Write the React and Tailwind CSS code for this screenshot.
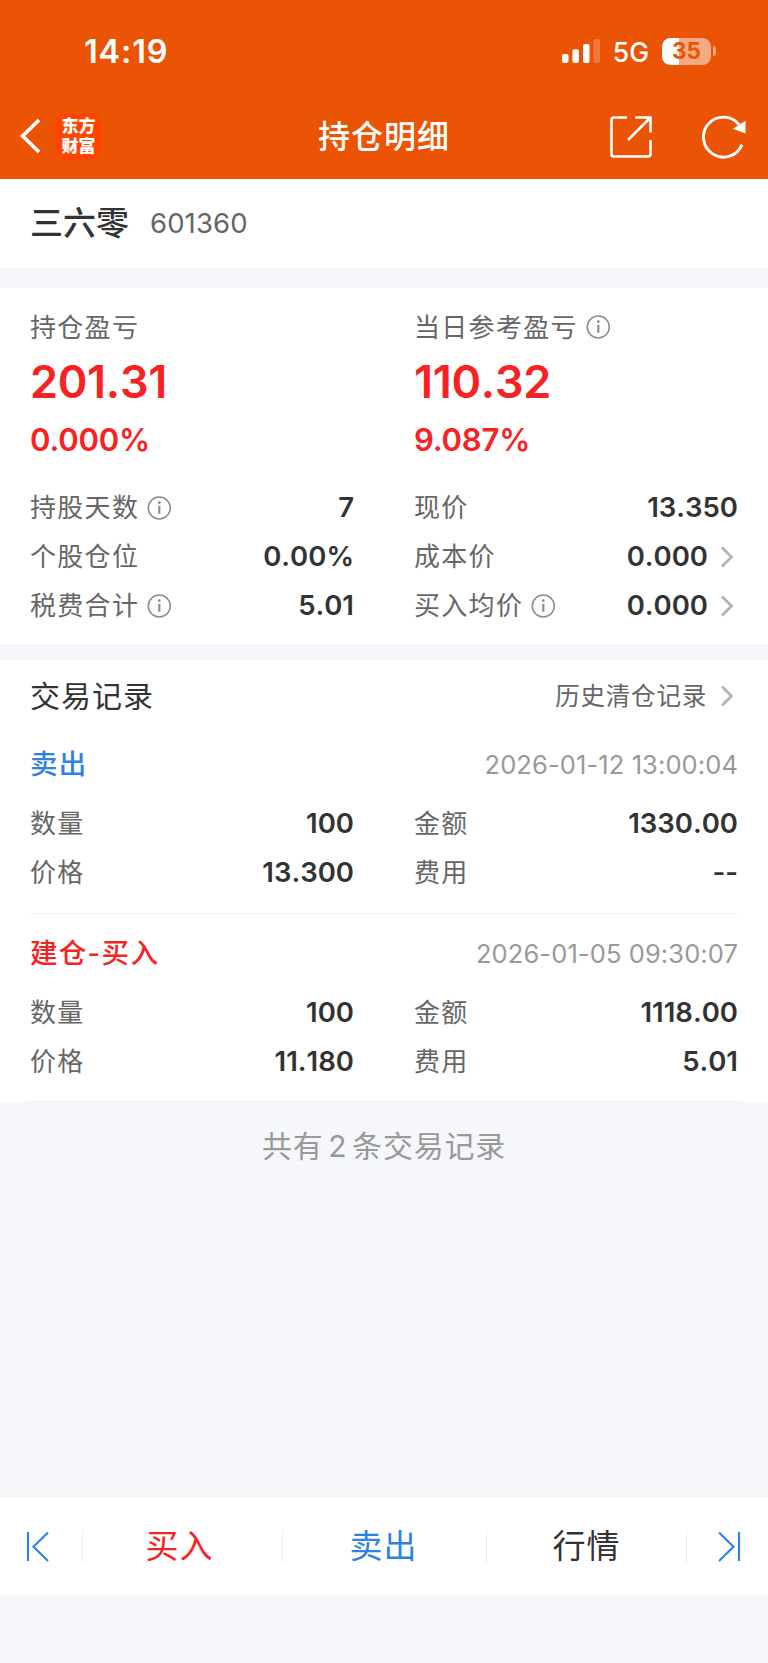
import clsx from "clsx";

const summary = [
  [
    { label: "持股天数", value: "7", info: true },
    { label: "现价", value: "13.350" },
  ],
  [
    { label: "个股仓位", value: "0.00%" },
    { label: "成本价", value: "0.000", link: true },
  ],
  [
    { label: "税费合计", value: "5.01", info: true },
    { label: "买入均价", value: "0.000", info: true, link: true },
  ],
];

const trades = [
  {
    type: "卖出",
    color: "text-[#2f80e7]",
    time: "2026-01-12 13:00:04",
    rows: [
      [{ label: "数量", value: "100" }, { label: "金额", value: "1330.00" }],
      [{ label: "价格", value: "13.300" }, { label: "费用", value: "--" }],
    ],
  },
  {
    type: "建仓-买入",
    color: "text-[#f82222]",
    time: "2026-01-05 09:30:07",
    rows: [
      [{ label: "数量", value: "100" }, { label: "金额", value: "1118.00" }],
      [{ label: "价格", value: "11.180" }, { label: "费用", value: "5.01" }],
    ],
  },
];

function InfoIcon() {
  return (
    <svg width="24" height="24" viewBox="0 0 24 24" fill="none" className="ml-2 text-[#8c8c8c]">
      <circle cx="12.3" cy="12" r="11" stroke="currentColor" strokeWidth="1.6" />
      <path d="M12.3 9.8v8" stroke="currentColor" strokeWidth="2.2" />
      <circle cx="12.3" cy="6.7" r="1.4" fill="currentColor" />
    </svg>
  );
}

function ChevronIcon() {
  return (
    <svg width="14" height="22" viewBox="0 0 14 22" fill="none" className="ml-3 mr-1">
      <path d="M2 1.5L11.5 11L2 20.5" stroke="#b3b3b3" strokeWidth="2.7" />
    </svg>
  );
}

function Field({ label, value, info, link }) {
  return (
    <div className="flex flex-1 items-center justify-between">
      <div className="flex items-center">
        <span className="text-[26px] tracking-[1.3px] text-[#666]">{label}</span>
        {info && <InfoIcon />}
      </div>
      <div className="flex items-center">
        <span className="text-[27.5px] font-semibold text-[#333] [font-kerning:none]">{value}</span>
        {link && <ChevronIcon />}
      </div>
    </div>
  );
}

function FieldRows({ rows }) {
  return rows.map((row, i) => (
    <div key={i} className="flex h-[49px] gap-[60px]">
      {row.map((field) => (
        <Field key={field.label} {...field} />
      ))}
    </div>
  ));
}

function Profit({ label, amount, percent, info }) {
  return (
    <div className="flex-1">
      <div className="flex h-[38px] items-center">
        <span className="text-[26px] tracking-[1.3px] text-[#666]">{label}</span>
        {info && <InfoIcon />}
      </div>
      <div className="mt-2 h-14 text-[45px] leading-14 font-semibold tracking-[-0.3px] text-[#f82222] [font-kerning:none]">{amount}</div>
      <div className="mt-2.5 h-10 text-[31px] leading-10 font-semibold tracking-[-0.2px] text-[#f82222]">{percent}</div>
    </div>
  );
}

function StatusBar() {
  return (
    <div className="flex h-[102px] items-center justify-between pr-[52px] pl-[84px] text-white">
      <span className="pt-0.5 text-[32.5px] font-semibold tracking-[0.8px]">14:19</span>
      <div className="flex items-center">
        <svg width="39" height="25" viewBox="0 0 39 25" fill="currentColor">
          <rect x="0" y="15" width="6.5" height="9" rx="2" />
          <rect x="10.4" y="10.3" width="6.5" height="13.7" rx="2" />
          <rect x="21" y="5" width="6.5" height="19" rx="2" />
          <rect x="31.5" y="0" width="6.5" height="24" rx="2" opacity="0.22" />
        </svg>
        <span className="ml-3 pt-[3px] text-[26.5px] font-medium">5G</span>
        <div className="ml-[13px] flex h-[27px] w-[49px] items-center justify-center rounded-[8.5px] bg-linear-to-r from-white from-35% to-white/50 to-35% text-[22.5px] font-bold text-[#ea5404]">
          35
        </div>
        <div className="ml-0.5 h-2.5 w-[3px] rounded-r-full bg-white/50" />
      </div>
    </div>
  );
}

function NavBar() {
  return (
    <div className="flex h-[68px] items-center justify-between pr-[22px] pl-5 text-white">
      <div className="flex w-[161px] items-center">
        <svg width="21" height="36" viewBox="0 0 21 36" fill="none" stroke="currentColor" strokeWidth="3.8">
          <path d="M19 2L2.6 18L19 34" />
        </svg>
        <div className="ml-3.5 flex h-[47px] w-[47px] flex-col items-center justify-center rounded-[10px] bg-[#ff4500] text-[17px] leading-[20px] font-black">
          <span>东方</span>
          <span>财富</span>
        </div>
      </div>
      <h1 className="pt-0.5 pl-px text-[32px] font-medium tracking-[1px]">持仓明细</h1>
      <div className="flex w-[160px] items-center justify-end pt-px">
        <svg width="42" height="42" viewBox="0 0 42 42" fill="none" stroke="currentColor" strokeWidth="2.6">
          <path d="M17 1.5H4Q1.5 1.5 1.5 4V38Q1.5 40.5 4 40.5H38Q40.5 40.5 40.5 38V24" />
          <path d="M25 1.5H40.5V16.5M40 2L18 24" />
        </svg>
        <svg width="44" height="44" viewBox="0 0 44 44" fill="none" className="ml-[50px]">
          <path d="M40 29.6A20 20 0 1 1 37 9.5" stroke="currentColor" strokeWidth="2.9" />
          <path d="M43.5 5.7V18.5L31 13.8Z" fill="currentColor" />
        </svg>
      </div>
    </div>
  );
}

function TradeCard({ type, color, time, rows }) {
  return (
    <div className="h-[189px] border-b border-[#f3f3f5] pt-[18px] last:h-[188px]">
      <div className="mb-3 flex h-11 items-center justify-between">
        <span className={clsx("text-[27.5px] font-medium tracking-[1.3px]", color)}>{type}</span>
        <span className="text-[25.5px] tracking-[0.1px] text-[#999]">{time}</span>
      </div>
      <FieldRows rows={rows} />
    </div>
  );
}

function BottomBar() {
  const divider = <div className="h-[33px] w-px bg-[#eee]" />;
  return (
    <div className="flex h-[99px] items-center border-t border-[#eee] bg-white text-[33px] tracking-[1px]">
      <button className="flex w-[82px] justify-center pr-1.5">
        <svg width="24" height="31" viewBox="0 0 24 31" fill="none" stroke="#2f80e7" strokeWidth="2.1">
          <path d="M2 1V30M22 1.5L7.5 15.8L22 30" />
        </svg>
      </button>
      {divider}
      <button className="w-[199px] pt-0.5 pr-1.5 text-[#f82222]">买入</button>
      {divider}
      <button className="w-[203px] pt-0.5 pr-0.5 text-[#2f80e7]">卖出</button>
      {divider}
      <button className="flex-1 pt-0.5 text-[#333]">行情</button>
      {divider}
      <button className="flex w-[81px] justify-center pl-0.5">
        <svg width="24" height="31" viewBox="0 0 24 31" fill="none" stroke="#2f80e7" strokeWidth="2.1">
          <path d="M22 1V30M2 1.5L16.5 15.8L2 30" />
        </svg>
      </button>
    </div>
  );
}

export default function App() {
  return (
    <div className="flex h-[1663px] w-[768px] flex-col bg-[#f5f7fa] pb-[68px] font-['Inter','Noto_Sans_CJK_SC',sans-serif]">
      <header className="h-[179px] bg-[#ea5404]">
        <StatusBar />
        <NavBar />
      </header>

      <div className="flex h-[89px] items-center bg-white px-[30px]">
        <span className="text-[33px] font-medium text-[#333]">三六零</span>
        <span className="ml-[21px] text-[27.5px] tracking-[0.1px] text-[#666]">601360</span>
      </div>

      <section className="mt-5 h-[356px] bg-white px-[30px] pt-5">
        <div className="mb-[23px] flex gap-[60px]">
          <Profit label="持仓盈亏" amount="201.31" percent="0.000%" />
          <Profit label="当日参考盈亏" amount="110.32" percent="9.087%" info />
        </div>
        <FieldRows rows={summary} />
      </section>

      <section className="mt-4 h-[442px] bg-white px-[30px]">
        <div className="flex h-[65px] items-center justify-between pt-[7px]">
          <h2 className="text-[30px] tracking-[1px] text-[#333]">交易记录</h2>
          <div className="flex items-center">
            <span className="pr-px text-[24.5px] tracking-[0.8px] text-[#666]">历史清仓记录</span>
            <ChevronIcon />
          </div>
        </div>
        {trades.map((trade) => (
          <TradeCard key={trade.time} {...trade} />
        ))}
      </section>

      <p className="mt-[22px] text-center text-[30px] tracking-[0.8px] text-[#999] [word-spacing:-4.5px]">共有 2 条交易记录</p>

      <div className="mt-auto">
        <BottomBar />
      </div>
    </div>
  );
}
